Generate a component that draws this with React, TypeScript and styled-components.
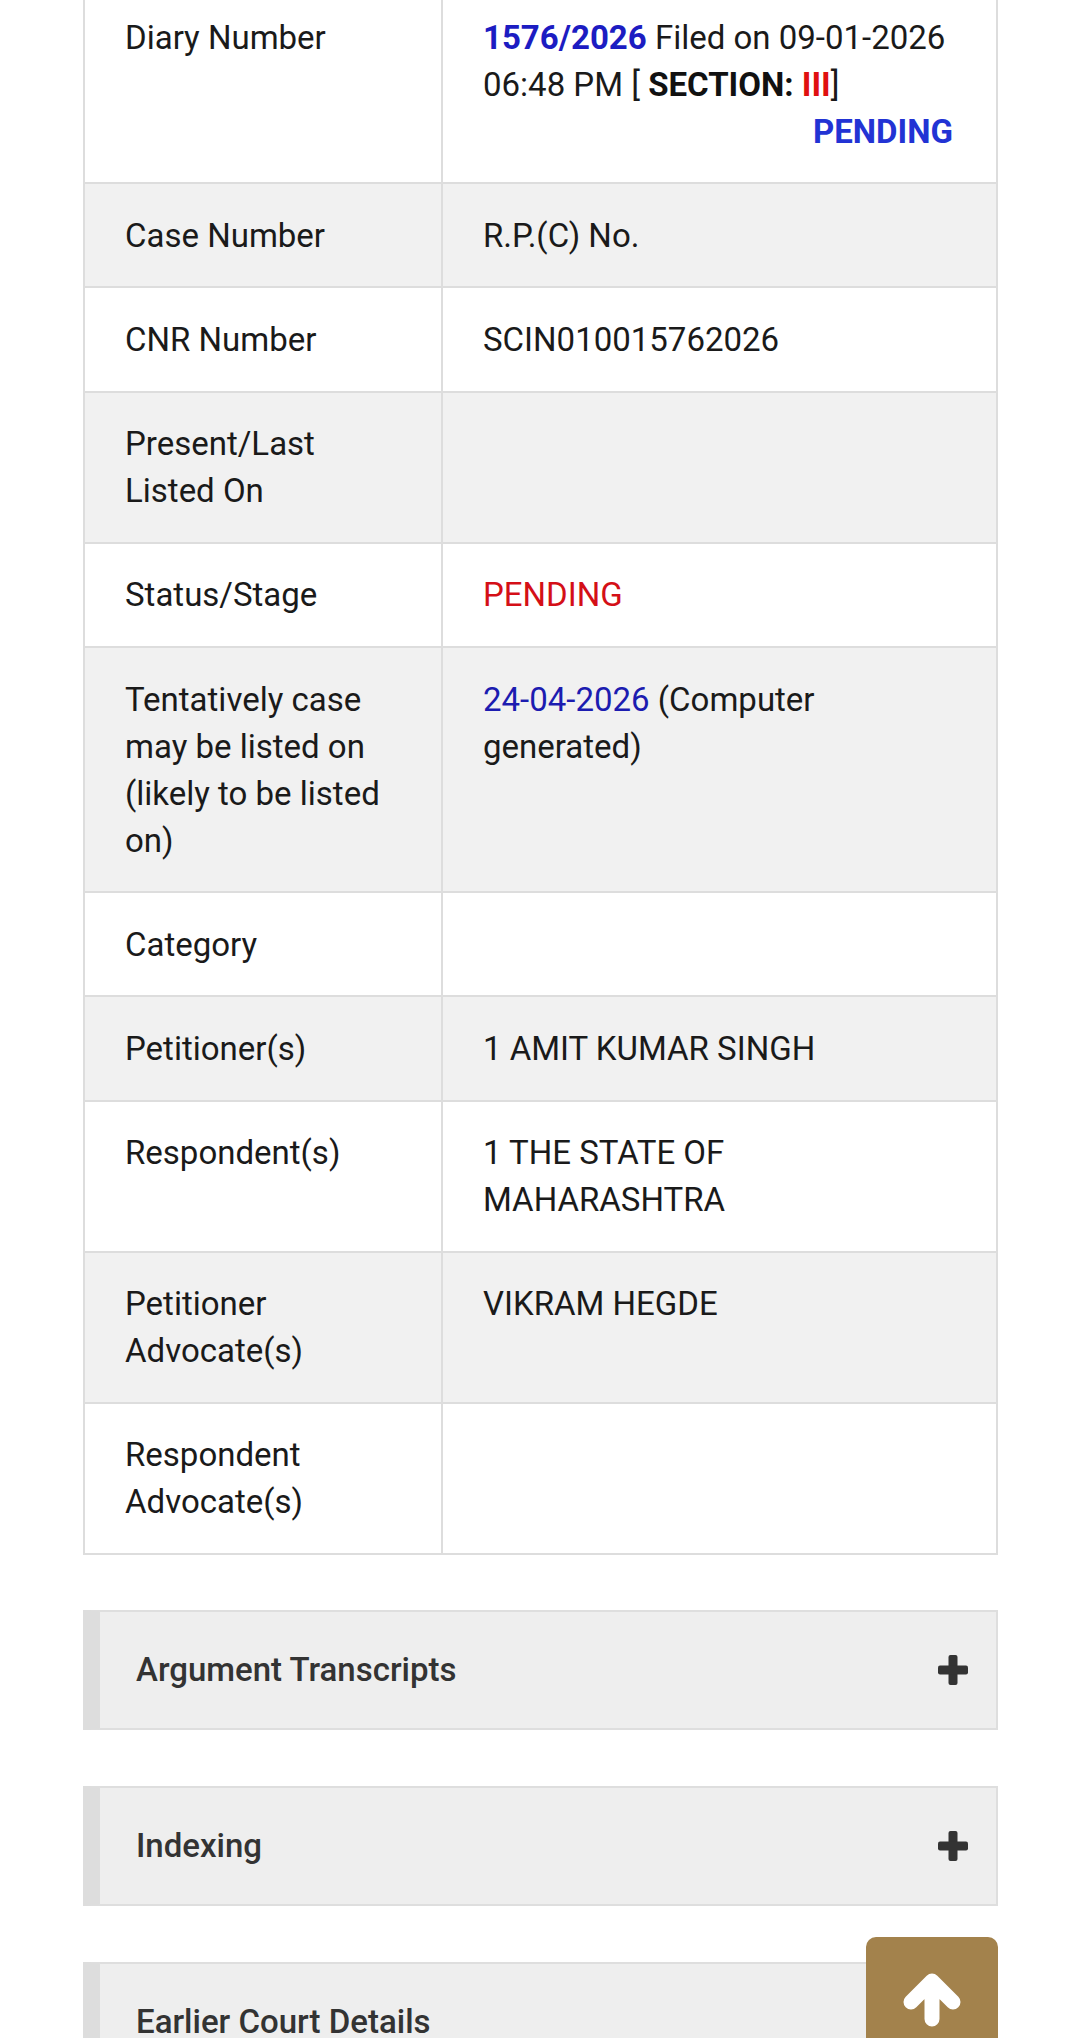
import React from "react";
import styled, { createGlobalStyle } from "styled-components";

const GlobalStyle = createGlobalStyle`
  html, body {
    margin: 0;
    padding: 0;
    background: #ffffff;
    overflow: hidden;
  }
  body {
    font-family: Roboto, "Noto Sans", Arial, sans-serif;
    color: #1a1a1a;
  }
`;

const Page = styled.div`
  padding: 0 82px 0 83px;
  margin-top: -16px;
`;

const DetailsTable = styled.table`
  width: 100%;
  border-collapse: collapse;
  table-layout: fixed;
  border: 2px solid #dddddd;
`;

const Row = styled.tr<{ $alt?: boolean }>`
  background: ${(p) => (p.$alt ? "#f1f1f1" : "#ffffff")};
`;

const Cell = styled.td`
  border: 2px solid #dddddd;
  padding: 27.6px 43px 27.6px 40px;
  vertical-align: top;
  font-size: 33px;
  line-height: 47px;
  color: #1a1a1a;
  font-weight: 400;
`;

const LabelCol = styled.col`
  width: 358px;
`;

const Strong = styled.b<{ $color?: string }>`
  font-weight: 700;
  color: ${(p) => p.$color || "#111111"};
`;

const Colored = styled.span<{ $color: string }>`
  color: ${(p) => p.$color};
`;

const RightStatus = styled.div`
  text-align: right;
  font-weight: 700;
  color: #2233d4;
`;

const PanelList = styled.div`
  display: flex;
  flex-direction: column;
  gap: 56px;
  margin-top: 55px;
`;

const Panel = styled.div`
  box-sizing: border-box;
  height: 120px;
  display: flex;
  align-items: center;
  justify-content: space-between;
  background: #eeeeee;
  border: 2px solid #dedede;
  border-left: 17px solid #dddddd;
  padding: 0 28px 0 36px;
`;

const PanelTitle = styled.h4`
  margin: 0;
  font-family: Roboto, "Noto Sans", Arial, sans-serif;
  font-size: 33px;
  font-weight: 500;
  color: #333333;
  line-height: 40px;
`;

const ScrollTop = styled.button`
  position: fixed;
  left: 866px;
  top: 1937px;
  width: 132px;
  height: 132px;
  border: none;
  border-radius: 10px;
  background: #a3824c;
  padding: 0;
  display: block;
  cursor: pointer;
`;

const PlusIcon = () => (
  <svg width="30" height="30" viewBox="0 0 30 30">
    <rect x="10.5" y="0" width="9" height="30" rx="2" fill="#333333" />
    <rect x="0" y="10.5" width="30" height="9" rx="2" fill="#333333" />
  </svg>
);

const ArrowUp = () => (
  <svg width="132" height="132" viewBox="0 0 132 132">
    <path
      d="M66 82 L66 45 M45 65 L66 44 L87 65"
      fill="none"
      stroke="#ffffff"
      strokeWidth="15"
      strokeLinecap="round"
      strokeLinejoin="round"
    />
  </svg>
);

type RowData = { label: string; value: React.ReactNode };

const rows: RowData[] = [
  {
    label: "Diary Number",
    value: (
      <>
        <Strong $color="#1c1cc2">1576/2026</Strong> Filed on 09-01-2026 06:48 PM [{" "}
        <Strong>SECTION: </Strong>
        <Strong $color="#e01010">III</Strong>]
        <RightStatus>PENDING</RightStatus>
      </>
    ),
  },
  { label: "Case Number", value: "R.P.(C) No." },
  { label: "CNR Number", value: "SCIN010015762026" },
  { label: "Present/Last Listed On", value: "" },
  { label: "Status/Stage", value: <Colored $color="#d40f17">PENDING</Colored> },
  {
    label: "Tentatively case may be listed on (likely to be listed on)",
    value: (
      <>
        <Colored $color="#1c1cb0">24-04-2026</Colored> (Computer generated)
      </>
    ),
  },
  { label: "Category", value: "" },
  { label: "Petitioner(s)", value: "1 AMIT KUMAR SINGH" },
  { label: "Respondent(s)", value: "1 THE STATE OF MAHARASHTRA" },
  { label: "Petitioner Advocate(s)", value: "VIKRAM HEGDE" },
  { label: "Respondent Advocate(s)", value: "" },
];

const panels = ["Argument Transcripts", "Indexing", "Earlier Court Details"];

export default function App() {
  return (
    <>
      <GlobalStyle />
      <Page>
        <DetailsTable>
          <colgroup>
            <LabelCol />
            <col />
          </colgroup>
          <tbody>
            {rows.map((r, i) => (
              <Row key={r.label} $alt={i % 2 === 1}>
                <Cell>{r.label}</Cell>
                <Cell>{r.value}</Cell>
              </Row>
            ))}
          </tbody>
        </DetailsTable>
        <PanelList>
          {panels.map((p) => (
            <Panel key={p}>
              <PanelTitle>{p}</PanelTitle>
              <PlusIcon />
            </Panel>
          ))}
        </PanelList>
      </Page>
      <ScrollTop aria-label="Scroll to top">
        <ArrowUp />
      </ScrollTop>
    </>
  );
}
